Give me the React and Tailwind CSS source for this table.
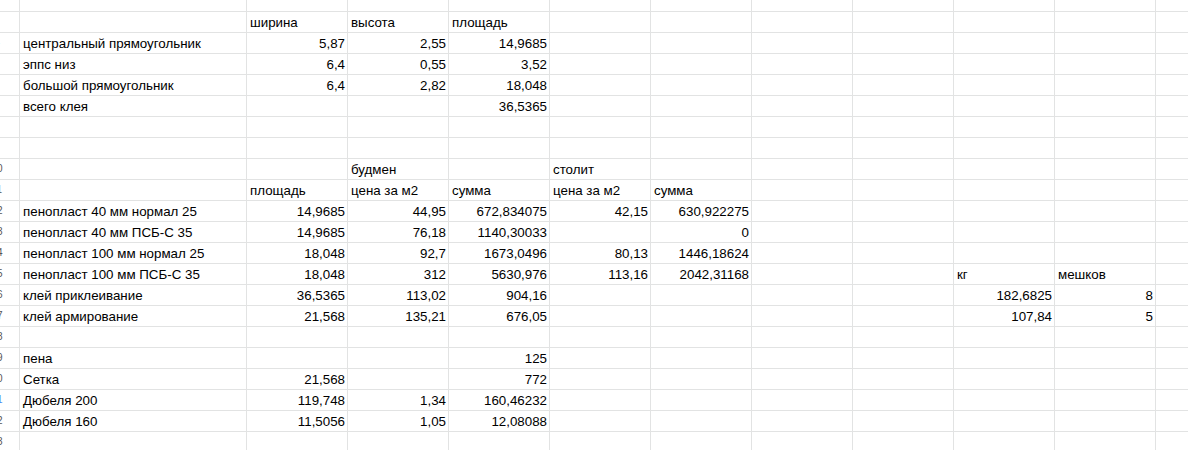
import React from 'react';

const COLS = [227, 101, 101, 101, 101, 101, 101, 101, 101, 101, 33];

// each row: [rowNumber, { colIndex: [text, align] }]
const L = 'l';
const R = 'r';

const rows = [
  [2, {}],
  [3, { 1: ['ширина', L], 2: ['высота', L], 3: ['площадь', L] }],
  [4, { 0: ['центральный прямоугольник', L], 1: ['5,87', R], 2: ['2,55', R], 3: ['14,9685', R] }],
  [5, { 0: ['эппс низ', L], 1: ['6,4', R], 2: ['0,55', R], 3: ['3,52', R] }],
  [6, { 0: ['большой прямоугольник', L], 1: ['6,4', R], 2: ['2,82', R], 3: ['18,048', R] }],
  [7, { 0: ['всего клея', L], 3: ['36,5365', R] }],
  [8, {}],
  [9, {}],
  [10, { 2: ['будмен', L], 4: ['столит', L] }],
  [11, { 1: ['площадь', L], 2: ['цена за м2', L], 3: ['сумма', L], 4: ['цена за м2', L], 5: ['сумма', L] }],
  [12, { 0: ['пенопласт 40 мм нормал 25', L], 1: ['14,9685', R], 2: ['44,95', R], 3: ['672,834075', R], 4: ['42,15', R], 5: ['630,922275', R] }],
  [13, { 0: ['пенопласт 40 мм ПСБ-С 35', L], 1: ['14,9685', R], 2: ['76,18', R], 3: ['1140,30033', R], 5: ['0', R] }],
  [14, { 0: ['пенопласт 100 мм нормал 25', L], 1: ['18,048', R], 2: ['92,7', R], 3: ['1673,0496', R], 4: ['80,13', R], 5: ['1446,18624', R] }],
  [15, { 0: ['пенопласт 100 мм ПСБ-С 35', L], 1: ['18,048', R], 2: ['312', R], 3: ['5630,976', R], 4: ['113,16', R], 5: ['2042,31168', R], 8: ['кг', L], 9: ['мешков', L] }],
  [16, { 0: ['клей приклеивание', L], 1: ['36,5365', R], 2: ['113,02', R], 3: ['904,16', R], 8: ['182,6825', R], 9: ['8', R] }],
  [17, { 0: ['клей армирование', L], 1: ['21,568', R], 2: ['135,21', R], 3: ['676,05', R], 8: ['107,84', R], 9: ['5', R] }],
  [18, {}],
  [19, { 0: ['пена', L], 3: ['125', R] }],
  [20, { 0: ['Сетка', L], 1: ['21,568', R], 3: ['772', R] }],
  [21, { 0: ['Дюбеля 200', L], 1: ['119,748', R], 2: ['1,34', R], 3: ['160,46232', R] }],
  [22, { 0: ['Дюбеля 160', L], 1: ['11,5056', R], 2: ['1,05', R], 3: ['12,08088', R] }],
  [23, {}],
];

function RowHeader({ n, height }) {
  return (
    <div className={`w-[20px] shrink-0 border-r border-b border-[#e2e3e3] flex justify-end items-center overflow-hidden ${height}`}>
      <div className={`w-[44px] shrink-0 text-center text-[10px] leading-none ${n === 21 ? 'text-[#4a8af4]' : 'text-[#555]'}`}>
        {n}
      </div>
    </div>
  );
}

export default function App() {
  return (
    <div className="w-[1188px] h-[450px] overflow-hidden bg-white text-black text-[13.33px] font-['Liberation_Sans',Arial,sans-serif]">
      {rows.map(([n, cells]) => {
        const height = n === 2 ? 'h-[12px]' : 'h-[21px]';
        return (
          <div key={n} className="flex">
            <RowHeader n={n} height={height} />
            {COLS.map((w, i) => {
              const cell = cells[i];
              return (
                <div
                  key={i}
                  style={{ width: w }}
                  className={`shrink-0 border-r border-b border-[#e2e3e3] flex items-end whitespace-nowrap pl-[3px] pr-[2px] pb-[2px] ${height} ${cell && cell[1] === R ? 'justify-end' : 'justify-start'}`}
                >
                  {cell && <span className="leading-[15px]">{cell[0]}</span>}
                </div>
              );
            })}
          </div>
        );
      })}
    </div>
  );
}
